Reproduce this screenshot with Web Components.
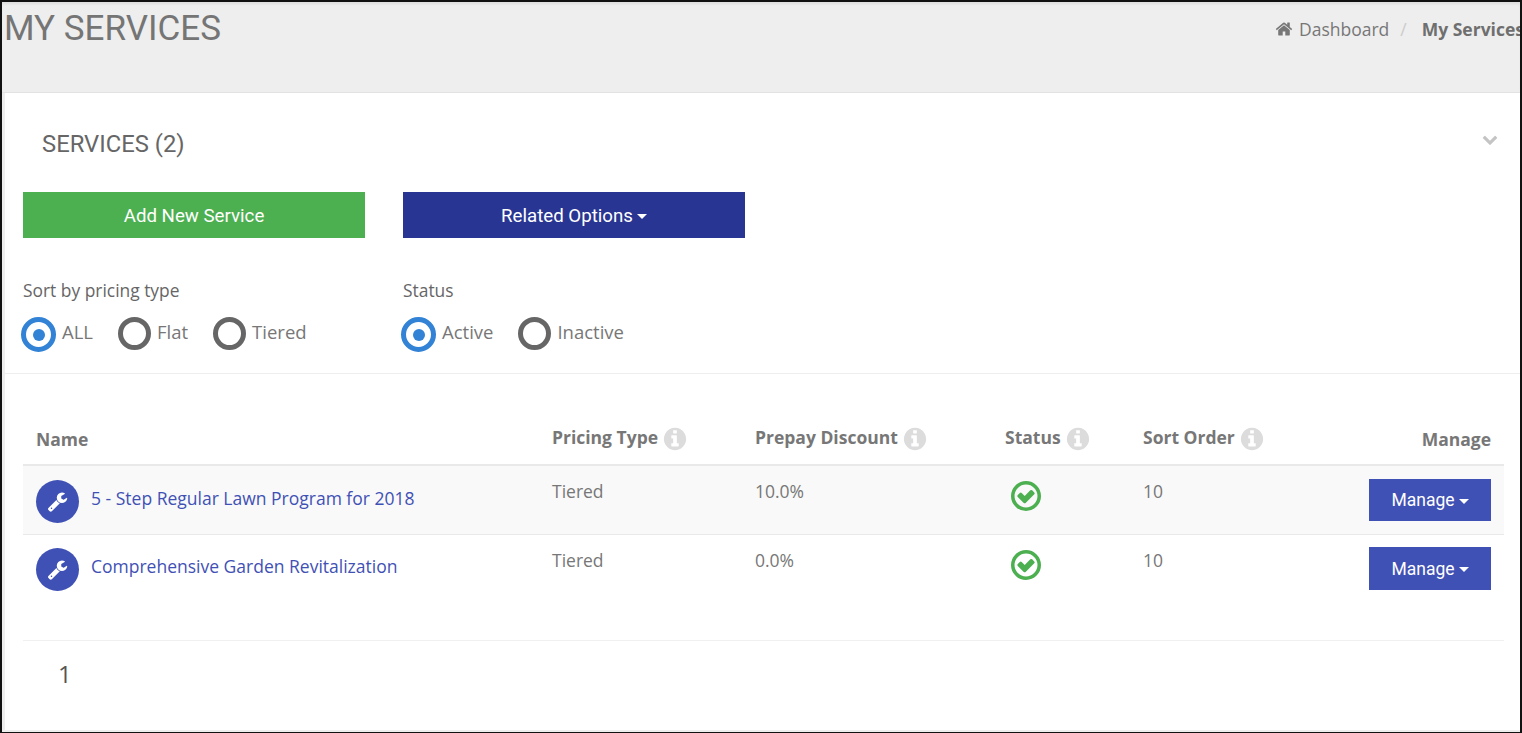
<!DOCTYPE html>
<html lang="en"><head><meta charset="utf-8"><title>My Services</title>
<style>html,body{margin:0;padding:0;height:100%;overflow:hidden;background:#fff}</style>
</head><body>
<app-frame>
  <page-header slot="header" heading="MY SERVICES"></page-header>
  <services-panel></services-panel>
</app-frame>
<script>
const P={
 wrench:'M448 1472q0-26-19-45t-45-19-45 19-19 45 19 45 45 19 45-19 19-45zm644-420l-682 682q-37 37-90 37-52 0-91-37l-106-108q-38-36-38-90 0-53 38-91l681-681q39 98 114.5 173.5t173.5 114.5zm634-435q0 39-23 106-47 134-164.5 217.5t-258.5 83.5q-185 0-316.5-131.5t-131.5-316.5 131.5-316.5 316.5-131.5q58 0 121.5 16.5t107.5 46.5q16 11 16 28t-16 28l-293 169v224l193 107q5-3 79-48.5t135.5-81 70.5-35.5q15 0 23.5 10t8.5 25z',
 home:'M1472 992v480q0 26-19 45t-45 19h-384v-384h-256v384h-384q-26 0-45-19t-19-45v-480q0-1 .5-3t.5-3l575-474 575 474q1 2 1 6zm223-69l-62 74q-8 9-21 11h-3q-13 0-21-7l-692-577-692 577q-12 8-24 7-13-2-21-11l-62-74q-8-10-7-23.5t11-21.5l719-599q32-26 76-26t76 26l244 204v-195q0-14 9-23t23-9h192q14 0 23 9t9 23v408l219 182q10 8 11 21.5t-7 23.5z',
 chevron:'M1683 808l-742 741q-19 19-45 19t-45-19l-742-741q-19-19-19-45.5t19-45.5l166-165q19-19 45-19t45 19l531 531 531-531q19-19 45-19t45 19l166 165q19 19 19 45.5t-19 45.5z',
 info:'M1152 1376v-160q0-14-9-23t-23-9h-96v-512q0-14-9-23t-23-9h-320q-14 0-23 9t-9 23v160q0 14 9 23t23 9h96v320h-96q-14 0-23 9t-9 23v160q0 14 9 23t23 9h448q14 0 23-9t9-23zm-128-896v-160q0-14-9-23t-23-9h-192q-14 0-23 9t-9 23v160q0 14 9 23t23 9h192q14 0 23-9t9-23zm640 416q0 209-103 385.5t-279.5 279.5-385.5 103-385.5-103-279.5-279.5-103-385.5 103-385.5 279.5-279.5 385.5-103 385.5 103 279.5 279.5 103 385.5z',
 check:'M1299 813l-422 422q-19 19-45 19t-45-19l-294-294q-19-19-19-45t19-45l102-102q19-19 45-19t45 19l147 147 275-275q19-19 45-19t45 19l102 102q19 19 19 45t-19 45z'
};
const icon=(n,s,c)=>`<svg xmlns="http://www.w3.org/2000/svg" width="${s}" height="${s}" viewBox="0 0 1792 1792" fill="${c}" aria-hidden="true"><path d="${P[n]}"/></svg>`;
function def(name,fn){customElements.define(name,class extends HTMLElement{connectedCallback(){if(this.shadowRoot)return;const r=this.attachShadow({mode:'open'});r.innerHTML=fn(this);}});}

def('app-frame',()=>`<style>
:host{display:flex;flex-direction:column;box-sizing:border-box;width:1522px;height:733px;border:2px solid #111;border-bottom-width:1.5px;border-right-width:2.5px;background:#eee;overflow:hidden;font-family:"Open Sans",sans-serif}
main{flex:1;display:flex;min-height:0;padding:0 0 2px 3px}
</style><slot name="header"></slot><main><slot></slot></main>`);

def('page-header',h=>`<style>
:host{display:flex;justify-content:space-between;align-items:flex-start;height:91px;box-sizing:border-box;flex:none;box-shadow:inset 0 3px 3px -1px rgba(0,0,0,.07);border-bottom:1px solid #e2e2e2;padding-left:2px;overflow:hidden}
h1{margin:0;padding-top:6px;font:400 35px/42px Roboto,sans-serif;color:#757575}
nav{display:flex;align-items:center;white-space:nowrap;font:400 17.5px/24px "Open Sans",sans-serif;color:#777;padding-top:15px;margin-right:-4px}
svg{margin-right:6px;flex:none}
i{font-style:normal;color:#ccc;margin:0 15px 0 11px}
b{font-weight:700;color:#6f6f6f}
</style><h1>${h.getAttribute('heading')}</h1><nav>${icon('home',18,'#777')}<span>Dashboard</span><i>/</i><b>My Services</b></nav>`);

def('action-button',h=>`<style>
:host{display:inline-flex;align-items:center;justify-content:center;box-sizing:border-box;width:var(--w,342px);height:var(--h,46px);padding-top:var(--tp,3px);background:var(--bg);color:#fff;font:400 var(--fs,18.7px)/1 Roboto,sans-serif;cursor:pointer}
.c{display:inline-block;width:0;height:0;margin-left:4px;border:5px solid transparent;border-top-color:#fff;border-bottom:0}
</style><slot></slot>${h.hasAttribute('caret')?'<span class="c"></span>':''}`);

def('radio-item',h=>{const on=h.hasAttribute('checked');return `<style>
:host{display:inline-flex;align-items:flex-start;gap:6px;height:24px;font:400 18.5px/24px "Open Sans",sans-serif;color:#777}
.r{box-sizing:border-box;border-radius:50%;display:flex;align-items:center;justify-content:center;background:#fff;flex:none;margin-top:-3px;
width:${on?35:33}px;height:${on?35:33}px;border:5px solid ${on?'#3282d6':'#666'}}
.d{width:12px;height:12px;border-radius:50%;background:#3282d6}
</style><span class="r">${on?'<span class="d"></span>':''}</span><slot></slot>`});

def('filter-group',h=>`<style>
:host{display:block;width:var(--w)}
.l{font:400 17.4px/22px "Open Sans",sans-serif;color:#666;margin-bottom:19px}
.o{display:flex;gap:25px;align-items:flex-start;margin-left:-2px}
</style><div class="l">${h.getAttribute('label')}</div><div class="o"><slot></slot></div>`);

def('info-head',h=>`<style>
:host{display:inline-flex;align-items:flex-start;gap:4px;height:22px;font:700 17.5px/22px "Open Sans",sans-serif;color:#777}
svg{flex:none}
</style><slot></slot>${icon('info',26,'#dcdcdc')}`);

def('status-ok',()=>`<style>:host{display:block;width:30px;height:30px}svg{display:block}</style>
<svg xmlns="http://www.w3.org/2000/svg" width="30" height="30" viewBox="0 0 1536 1536" aria-hidden="true"><circle cx="768" cy="768" r="678" fill="none" stroke="#4caf50" stroke-width="180"/><path fill="#4caf50" transform="translate(768 768) scale(1.05) translate(-896 -896)" d="${P.check}"/></svg>`);

def('service-row',h=>`<style>
:host{display:grid;grid-template-columns:516px 203px 250px 138px 374px;box-sizing:border-box;height:var(--rh,69px);background:var(--rb,transparent);border-bottom:var(--rl,0);font:400 17.5px/22px "Open Sans",sans-serif;color:#777}
.c{padding:var(--pt,14px) 13px 0}
.x{padding-top:calc(var(--pt,14px) + var(--tm,0px))}
.n{display:flex;gap:12px;align-items:flex-start}
.a{width:43px;height:43px;border-radius:50%;background:#3f51b5;display:flex;align-items:center;justify-content:center;flex:none}
a{color:#3f51b5;text-decoration:none;font-size:17.5px;line-height:24px;margin-top:6px}
.o{display:grid;grid-template-columns:1fr auto}
.m{margin-top:calc(-1px - var(--tm,0px))}
status-ok{margin:1px 0 0 6px}
</style>
<div class="c n"><span class="a">${icon('wrench',21,'#fff')}</span><a href="#">${h.getAttribute('name')}</a></div>
<div class="c x">${h.getAttribute('pricing')}</div>
<div class="c x">${h.getAttribute('discount')}</div>
<div class="c x"><status-ok></status-ok></div>
<div class="c x o"><span>${h.getAttribute('order')}</span><span class="m"><action-button caret style="--w:122px;--h:var(--bh,43px);--bg:#3f51b5;--fs:17.5px;--tp:2px">Manage</action-button></span></div>`);

def('services-table',()=>`<style>
:host{display:block;margin:41px 16px 0 18px}
.h{display:grid;grid-template-columns:516px 203px 250px 138px 374px;height:51px;box-sizing:border-box;border-bottom:2px solid #e9e9e9;align-items:start;font:700 17.5px/22px "Open Sans",sans-serif;color:#777}
.h>div{padding:0 13px}
.h>.n{padding-top:13px}
.h>.i{padding-top:11px}
.e{display:grid;grid-template-columns:1fr auto;align-items:start}
.r{padding-top:2px}
.f{border-top:1.5px solid #f0f0f0;margin-top:36px;padding:18px 0 0 35px;font:400 24px/30px "Open Sans",sans-serif;color:#555}
</style>
<div class="h"><div class="n">Name</div><div class="i"><info-head>Pricing Type</info-head></div><div class="i"><info-head>Prepay Discount</info-head></div><div class="i"><info-head>Status</info-head></div><div class="e i"><info-head>Sort Order</info-head><span class="r">Manage</span></div></div>
<service-row style="--rb:#f9f9f9;--rl:1.5px solid #e9e9e9;--bh:42px" name="5 - Step Regular Lawn Program for 2018" pricing="Tiered" discount="10.0%" order="10"></service-row>
<service-row style="--pt:13px;--tm:1px" name="Comprehensive Garden Revitalization" pricing="Tiered" discount="0.0%" order="10"></service-row>
<div class="f">1</div>`);

def('services-panel',()=>`<style>
:host{display:block;flex:1;background:#fff;min-width:0;overflow:hidden}
.t{display:flex;justify-content:space-between;padding:33px 22px 0 37px;height:65px;box-sizing:border-box}
h2{margin:0;font:400 23.8px/36px Roboto,sans-serif;color:#666}
.ch{margin-top:4px}
.b{display:flex;gap:38px;padding:34px 18px 0}
.f{display:flex;padding:41px 18px 29px;border-bottom:1px solid #eee}
</style>
<div class="t"><h2>SERVICES (2)</h2><span class="ch">${icon('chevron',16,'#c4c4c4')}</span></div>
<div class="b"><action-button style="--bg:#4caf50">Add New Service</action-button><action-button caret style="--bg:#283593">Related Options</action-button></div>
<div class="f">
<filter-group label="Sort by pricing type" style="--w:380px"><radio-item checked>ALL</radio-item><radio-item>Flat</radio-item><radio-item>Tiered</radio-item></filter-group>
<filter-group label="Status"><radio-item checked>Active</radio-item><radio-item>Inactive</radio-item></filter-group>
</div>
<services-table></services-table>`);
</script>
</body></html>
